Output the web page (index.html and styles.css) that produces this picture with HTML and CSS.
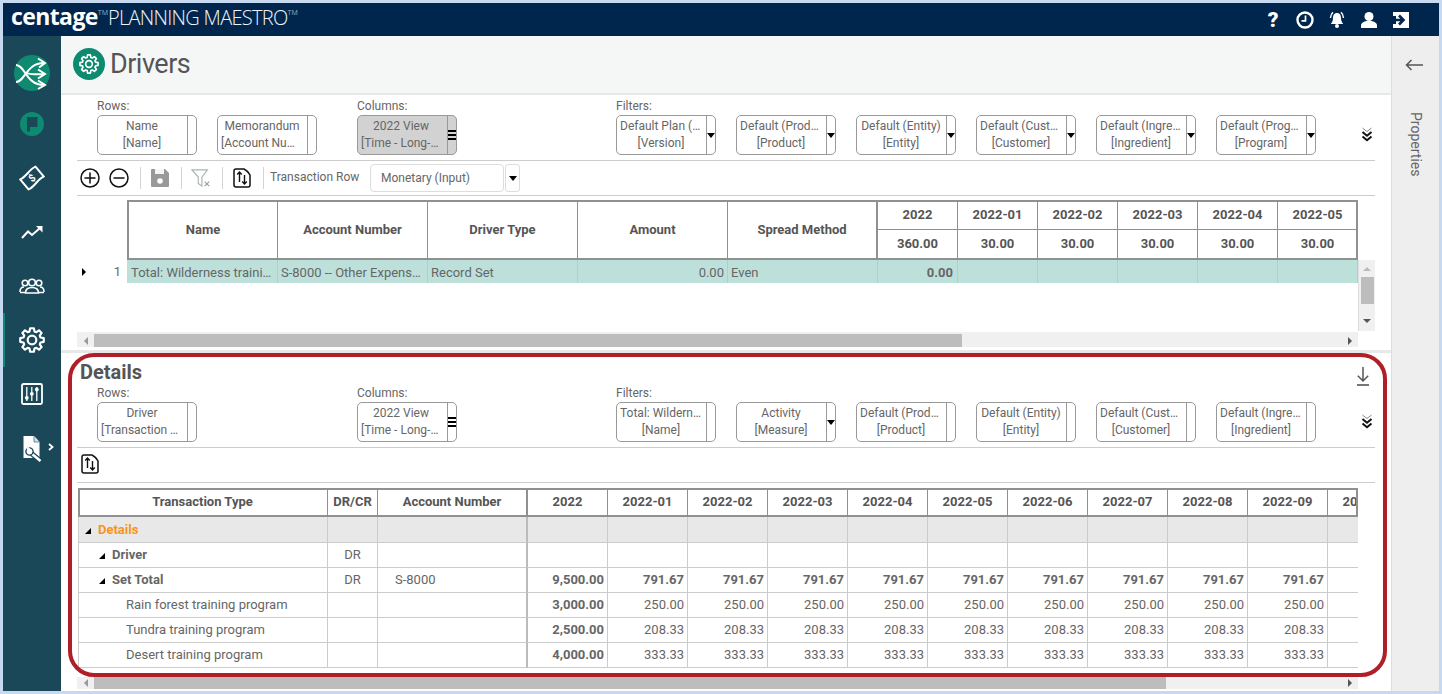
FILE: index.html
```html
<!DOCTYPE html>
<html lang="en">

<head>
  <meta charset="UTF-8">
  <title>Drivers - Planning Maestro</title>
  <link rel="stylesheet" href="styles.css">
</head>

<body>
  <svg class="defs" width="0" height="0">
    <symbol id="gear" viewBox="0 0 24 24">
      <path d="M9.74 4.12L10.28 1.14 13.72 1.14 14.26 4.12 15.98 4.83 18.47 3.1 20.9 5.53 19.17 8.02 19.88 9.74 22.86 10.28 22.86 13.72 19.88 14.26 19.17 15.98 20.9 18.47 18.47 20.9 15.98 19.17 14.26 19.88 13.72 22.86 10.28 22.86 9.74 19.88 8.02 19.17 5.53 20.9 3.1 18.47 4.83 15.98 4.12 14.26 1.14 13.72 1.14 10.28 4.12 9.74 4.83 8.02 3.1 5.53 5.53 3.1 8.02 4.83Z" fill="none" stroke="currentColor" stroke-width="2" stroke-linejoin="round"/>
      <circle cx="12" cy="12" r="4" fill="none" stroke="currentColor" stroke-width="2"/>
    </symbol>
    <symbol id="swap" viewBox="0 0 18 20">
      <path d="M1 3Q1 1 3 1H11C13 2 16 5 17 7V17Q17 19 15 19H3Q1 19 1 17Z" fill="#fff" stroke="#111" stroke-width="1.500" stroke-linejoin="round"/>
      <path d="M6.500 14V4M4.200 6.400L6.500 4 8.800 6.400M11.500 7V16M9.200 13.600L11.500 16 13.800 13.600" fill="none" stroke="#111" stroke-width="1.400"/>
    </symbol>
    <symbol id="chevrons" viewBox="0 0 12 16">
      <path d="M1.500 1L6 4.500 10.500 1" fill="none" stroke="#888" stroke-width="1"/>
      <path d="M1.500 5L6 8.800 10.500 5M1.500 9.500L6 13.300 10.500 9.500" fill="none" stroke="#111" stroke-width="2"/>
    </symbol>
  </svg>

  <div class="window">
    <!-- top bar -->
    <header class="topbar">
      <div class="brand">
        <span class="brand-name">centage</span><span class="tm">TM</span>
        <span class="brand-product">PLANNING MAESTRO</span><span class="tm">TM</span>
      </div>
      <div class="top-icons">
        <span class="top-help">?</span>
        <svg class="top-icon" viewBox="0 0 20 20"><circle cx="10" cy="10" r="7.500" fill="none" stroke="#fff" stroke-width="2.400"/><path d="M10.500 5.500V10.800H6.500" fill="none" stroke="#fff" stroke-width="1.700"/></svg>
        <svg class="top-icon" viewBox="0 0 20 20"><path d="M10 3C7 3 6 5.500 6 8 6 11 5 12.500 3.800 14H16.200C15 12.500 14 11 14 8 14 5.500 13 3 10 3Z" fill="#fff"/><circle cx="10" cy="16" r="2" fill="#fff"/><path d="M3.500 8C3.600 5.500 4.500 3.500 6 2.200M16.500 8C16.400 5.500 15.500 3.500 14 2.200" fill="none" stroke="#fff" stroke-width="1.500"/></svg>
        <svg class="top-icon" viewBox="0 0 20 20"><circle cx="10" cy="6.500" r="4.500" fill="#fff"/><path d="M2 18V15.500C2 13 5 11.500 7.500 11H12.500C15 11.500 18 13 18 15.500V18Z" fill="#fff"/></svg>
        <svg class="top-icon" viewBox="0 0 20 20"><path d="M2 2H18V18H2V14H5V6H2Z" fill="#fff"/><path d="M1 10H11M8 5.500L12.500 10 8 14.500" fill="none" stroke="#00264d" stroke-width="2.600"/></svg>
      </div>
    </header>

    <div class="app">
      <!-- left navigation -->
      <nav class="sidebar">
        <svg class="nav-logo" viewBox="0 0 36 36">
          <circle cx="18" cy="18" r="18" fill="#0d8a6f"/>
          <path d="M2 27C11 27 12 8 30 8M2 10C11 10 12 30 30 30M13 18C16 20 20 19 30 19M24 3.500L31 8 25 12.500M24 14.500L31 19 24 23.500M24 25.500L31 30 24 34" fill="none" stroke="#fff" stroke-width="2"/>
        </svg>
        <svg class="nav-flag" viewBox="0 0 24 24">
          <circle cx="12" cy="12" r="12" fill="#0d8a6f"/>
          <path d="M7 5H17.500V15H10V19.500H7Z" fill="#1b4858"/>
        </svg>
        <svg class="nav-icon" viewBox="0 0 26 26">
          <g transform="rotate(-40 13 13)">
            <path d="M3 6.500C9 8.500 17 4.500 23 6.500V19.500C17 17.500 9 21.500 3 19.500Z" fill="#1b4858" stroke="#fff" stroke-width="2" stroke-linejoin="round"/>
            <text class="money-sign" x="13" y="16.500">$</text>
          </g>
        </svg>
        <svg class="nav-icon" viewBox="0 0 26 26">
          <path d="M3 19L9 12.500 13 16 20.500 9.500" fill="none" stroke="#fff" stroke-width="2"/>
          <path d="M17 7H23.500V13.500Z" fill="#fff"/>
        </svg>
        <svg class="nav-icon" viewBox="0 0 26 26">
          <g fill="none" stroke="#fff" stroke-width="1.600">
            <circle cx="6" cy="10" r="2.800"/><circle cx="20" cy="10" r="2.800"/>
            <path d="M1 19C1 15 3 14 5 14M25 19C25 15 23 14 21 14"/>
            <circle cx="13" cy="9.500" r="3.300"/>
            <path d="M6.500 20C6.500 15.500 9 14.500 13 14.500S19.500 15.500 19.500 20Z"/>
            <path d="M1 19.500H6M20 19.500H25"/>
          </g>
        </svg>
        <div class="nav-active">
          <svg class="nav-icon" viewBox="0 0 26 26" color="#fff"><use href="#gear"/></svg>
        </div>
        <svg class="nav-icon" viewBox="0 0 26 26">
          <rect x="3" y="3" width="20" height="20" rx="1.500" fill="none" stroke="#fff" stroke-width="1.800"/>
          <path d="M7.800 6V20M12.800 6V20M17.800 6V20" stroke="#fff" stroke-width="1.300"/>
          <circle cx="7.800" cy="16.800" r="1.900" fill="#fff"/>
          <circle cx="12.800" cy="12.800" r="1.900" fill="#fff"/>
          <circle cx="17.800" cy="8.500" r="1.900" fill="#fff"/>
        </svg>
        <div class="nav-doc">
          <svg class="nav-icon" viewBox="0 0 26 26">
            <path d="M4.500 0H15L20.500 6V22H4.500Z" fill="#fff"/>
            <path d="M15 0V6H20.500" fill="#cfe4ea" stroke="#1b4858" stroke-width=".6"/>
            <path d="M12.500 17.500L21.500 25" stroke="#1b4858" stroke-width="5"/>
            <path d="M12.500 17.500L21.500 25" stroke="#fff" stroke-width="2.600"/>
            <circle cx="10.500" cy="15.500" r="3.600" fill="#fff" stroke="#1b4858" stroke-width="1.400"/>
            <path d="M8.500 11.500L11 15" stroke="#fff" stroke-width="2.400"/>
          </svg>
          <svg class="nav-more" viewBox="0 0 6 8"><path d="M1 1L4.500 4 1 7" fill="none" stroke="#fff" stroke-width="1.800"/></svg>
        </div>
      </nav>

      <main class="content">
        <div class="page-title">
          <span class="title-badge"><svg viewBox="0 0 24 24" color="#fff"><use href="#gear"/></svg></span>
          <h1>Drivers</h1>
        </div>

        <!-- upper grid -->
        <section class="panel panel-upper">
          <div class="field-bar">
            <div class="field-group">
              <label>Rows:</label>
              <div class="pills">
                <div class="pill"><div class="pill-text"><span>Name</span><span>[Name]</span></div><div class="pill-btn"></div></div>
                <div class="pill"><div class="pill-text"><span>Memorandum</span><span>[Account Number]</span></div><div class="pill-btn"></div></div>
              </div>
            </div>
            <div class="field-group">
              <label>Columns:</label>
              <div class="pills">
                <div class="pill pill-on pill-time"><div class="pill-text"><span>2022 View</span><span>[Time - Long-term]</span></div><div class="pill-btn"><i class="menu-bars"></i></div></div>
              </div>
            </div>
            <div class="field-group">
              <label>Filters:</label>
              <div class="pills">
                <div class="pill"><div class="pill-text"><span>Default Plan (Working)</span><span>[Version]</span></div><div class="pill-btn"><i class="caret"></i></div></div>
                <div class="pill"><div class="pill-text"><span>Default (Product)</span><span>[Product]</span></div><div class="pill-btn"><i class="caret"></i></div></div>
                <div class="pill"><div class="pill-text"><span>Default (Entity)</span><span>[Entity]</span></div><div class="pill-btn"><i class="caret"></i></div></div>
                <div class="pill"><div class="pill-text"><span>Default (Customer)</span><span>[Customer]</span></div><div class="pill-btn"><i class="caret"></i></div></div>
                <div class="pill"><div class="pill-text"><span>Default (Ingredient)</span><span>[Ingredient]</span></div><div class="pill-btn"><i class="caret"></i></div></div>
                <div class="pill"><div class="pill-text"><span>Default (Program)</span><span>[Program]</span></div><div class="pill-btn"><i class="caret"></i></div></div>
                <svg class="more-fields"><use href="#chevrons"/></svg>
              </div>
            </div>
          </div>

          <div class="toolbar">
            <svg class="tool tool-first" viewBox="0 0 20 20"><circle cx="10" cy="10" r="9" fill="none" stroke="#111" stroke-width="1.500"/><path d="M4.500 10H15.500M10 4.500V15.500" stroke="#111" stroke-width="1.500"/></svg>
            <svg class="tool" viewBox="0 0 20 20"><circle cx="10" cy="10" r="9" fill="none" stroke="#111" stroke-width="1.500"/><path d="M4.500 10H15.500" stroke="#111" stroke-width="1.500"/></svg>
            <i class="tool-sep"></i>
            <svg class="tool" viewBox="0 0 20 20"><path d="M2 1H15L19 5V18Q19 19 18 19H2Q1 19 1 18V2Q1 1 2 1Z" fill="#999"/><path d="M5 1H14V6H5Z" fill="#fff" opacity=".9"/><circle cx="10" cy="13" r="2.800" fill="#fff"/></svg>
            <i class="tool-sep"></i>
            <svg class="tool" viewBox="0 0 22 20"><path d="M1 1H18L12 9V19L8 16V9Z" fill="#fff" stroke="#a9b3b6" stroke-width="1.300"/><path d="M15 14L20 19M20 14L15 19" stroke="#999" stroke-width="1.200"/></svg>
            <i class="tool-sep"></i>
            <svg class="tool"><use href="#swap"/></svg>
            <i class="tool-sep"></i>
            <span class="tool-label">Transaction Row</span>
            <div class="combo">Monetary (Input)</div>
            <div class="combo-btn"><i class="caret"></i></div>
          </div>

          <div class="grid-head grid-head-upper">
            <table>
              <colgroup><col class="w149"><col class="w150"><col class="w150"><col class="w150"><col class="w150"><col class="w80"><col class="w80"><col class="w80"><col class="w80"><col class="w80"><col class="w80"></colgroup>
              <tr class="tall">
                <th rowspan="2">Name</th><th rowspan="2">Account Number</th><th rowspan="2">Driver Type</th><th rowspan="2">Amount</th><th rowspan="2" class="freeze">Spread Method</th>
                <th>2022</th><th>2022-01</th><th>2022-02</th><th>2022-03</th><th>2022-04</th><th>2022-05</th>
              </tr>
              <tr class="tall">
                <th>360.00</th><th>30.00</th><th>30.00</th><th>30.00</th><th>30.00</th><th>30.00</th>
              </tr>
            </table>
          </div>

          <div class="grid-area">
            <div class="grid-body grid-body-upper">
              <table class="driver-table">
                <colgroup><col class="w50"><col class="w151"><col class="w150"><col class="w150"><col class="w150"><col class="w150"><col class="w80"><col class="w80"><col class="w80"><col class="w80"><col class="w80"><col class="w80"></colgroup>
                <tr>
                  <td class="row-head"><i class="row-arrow"></i><span>1</span></td>
                  <td class="first">Total: Wilderness training program</td>
                  <td>S-8000 -- Other Expenses</td>
                  <td>Record Set</td>
                  <td class="num">0.00</td>
                  <td>Even</td>
                  <td class="num bold">0.00</td>
                  <td></td><td></td><td></td><td></td><td></td>
                </tr>
              </table>
            </div>
            <div class="vscroll">
              <i class="sc-up"></i>
              <b></b>
              <i class="sc-down"></i>
            </div>
          </div>

          <div class="hscroll hscroll-upper">
            <span class="sc-end"><i class="sc-left"></i></span>
            <b class="thumb-upper"></b>
            <span class="sc-end sc-end-right"><i class="sc-right"></i></span>
          </div>
        </section>

        <div class="splitter"></div>

        <!-- details grid -->
        <section class="panel panel-details">
          <div class="details-head">
            <h2>Details</h2>
            <svg class="download" viewBox="0 0 14 20"><path d="M7 1V15M1.800 9.800L7 15 12.200 9.800" fill="none" stroke="#555" stroke-width="1.500"/><path d="M1 19H13" stroke="#555" stroke-width="1.600"/></svg>
          </div>
          <div class="field-bar field-bar-details">
            <div class="field-group">
              <label>Rows:</label>
              <div class="pills">
                <div class="pill"><div class="pill-text"><span>Driver</span><span>[Transaction Type]</span></div><div class="pill-btn"></div></div>
              </div>
            </div>
            <div class="field-group">
              <label>Columns:</label>
              <div class="pills">
                <div class="pill pill-time"><div class="pill-text"><span>2022 View</span><span>[Time - Long-term]</span></div><div class="pill-btn"><i class="menu-bars"></i></div></div>
              </div>
            </div>
            <div class="field-group">
              <label>Filters:</label>
              <div class="pills">
                <div class="pill"><div class="pill-text"><span>Total: Wilderness training</span><span>[Name]</span></div><div class="pill-btn"></div></div>
                <div class="pill"><div class="pill-text"><span>Activity</span><span>[Measure]</span></div><div class="pill-btn"><i class="caret"></i></div></div>
                <div class="pill"><div class="pill-text"><span>Default (Product)</span><span>[Product]</span></div><div class="pill-btn"></div></div>
                <div class="pill"><div class="pill-text"><span>Default (Entity)</span><span>[Entity]</span></div><div class="pill-btn"></div></div>
                <div class="pill"><div class="pill-text"><span>Default (Customer)</span><span>[Customer]</span></div><div class="pill-btn"></div></div>
                <div class="pill"><div class="pill-text"><span>Default (Ingredient)</span><span>[Ingredient]</span></div><div class="pill-btn"></div></div>
                <svg class="more-fields"><use href="#chevrons"/></svg>
              </div>
            </div>
          </div>

          <div class="toolbar toolbar-details">
            <svg class="tool-swap"><use href="#swap"/></svg>
          </div>

          <div class="grid-head grid-head-details">
            <table>
              <colgroup><col class="w248"><col class="w50"><col class="w150"><col class="w80"><col class="w80"><col class="w80"><col class="w80"><col class="w80"><col class="w80"><col class="w80"><col class="w80"><col class="w80"><col class="w80"><col class="w80"></colgroup>
              <tr>
                <th>Transaction Type</th><th>DR/CR</th><th class="freeze">Account Number</th>
                <th>2022</th><th>2022-01</th><th>2022-02</th><th>2022-03</th><th>2022-04</th><th>2022-05</th><th>2022-06</th><th>2022-07</th><th>2022-08</th><th>2022-09</th><th>2022-10</th>
              </tr>
            </table>
          </div>

          <div class="grid-body grid-body-details">
            <table class="details-table">
              <colgroup><col class="w250"><col class="w50"><col class="w150"><col class="w80"><col class="w80"><col class="w80"><col class="w80"><col class="w80"><col class="w80"><col class="w80"><col class="w80"><col class="w80"><col class="w80"><col class="w80"></colgroup>
              <tr class="row-group">
                <td class="lvl0"><i class="tree"></i><b class="orange">Details</b></td><td></td><td class="freeze"></td>
                <td></td><td></td><td></td><td></td><td></td><td></td><td></td><td></td><td></td><td></td><td></td>
              </tr>
              <tr>
                <td class="lvl1"><i class="tree"></i><b>Driver</b></td><td class="mid">DR</td><td class="freeze"></td>
                <td></td><td></td><td></td><td></td><td></td><td></td><td></td><td></td><td></td><td></td><td></td>
              </tr>
              <tr class="row-total">
                <td class="lvl1"><i class="tree"></i><b>Set Total</b></td><td class="mid">DR</td><td class="freeze acct">S-8000</td>
                <td class="num">9,500.00</td><td class="num">791.67</td><td class="num">791.67</td><td class="num">791.67</td><td class="num">791.67</td><td class="num">791.67</td><td class="num">791.67</td><td class="num">791.67</td><td class="num">791.67</td><td class="num">791.67</td><td></td>
              </tr>
              <tr>
                <td class="lvl2">Rain forest training program</td><td></td><td class="freeze"></td>
                <td class="num bold">3,000.00</td><td class="num">250.00</td><td class="num">250.00</td><td class="num">250.00</td><td class="num">250.00</td><td class="num">250.00</td><td class="num">250.00</td><td class="num">250.00</td><td class="num">250.00</td><td class="num">250.00</td><td></td>
              </tr>
              <tr>
                <td class="lvl2">Tundra training program</td><td></td><td class="freeze"></td>
                <td class="num bold">2,500.00</td><td class="num">208.33</td><td class="num">208.33</td><td class="num">208.33</td><td class="num">208.33</td><td class="num">208.33</td><td class="num">208.33</td><td class="num">208.33</td><td class="num">208.33</td><td class="num">208.33</td><td></td>
              </tr>
              <tr>
                <td class="lvl2">Desert training program</td><td></td><td class="freeze"></td>
                <td class="num bold">4,000.00</td><td class="num">333.33</td><td class="num">333.33</td><td class="num">333.33</td><td class="num">333.33</td><td class="num">333.33</td><td class="num">333.33</td><td class="num">333.33</td><td class="num">333.33</td><td class="num">333.33</td><td></td>
              </tr>
            </table>
          </div>

          <div class="hscroll hscroll-details">
            <span class="sc-end"><i class="sc-left"></i></span>
            <b class="thumb-details"></b>
            <span class="sc-end sc-end-right"><i class="sc-right"></i></span>
          </div>

          <!-- red callout drawn over the panel -->
          <div class="callout"></div>
        </section>
      </main>

      <!-- properties rail -->
      <aside class="properties">
        <svg class="back" viewBox="0 0 18 12"><path d="M18 6H1.500M6.500 1L1.500 6 6.500 11" fill="none" stroke="#555" stroke-width="1.500"/></svg>
        <span class="properties-label">Properties</span>
      </aside>
    </div>
  </div>
</body>

</html>
```

FILE: styles.css
```css
:root {
  --navy: #00264d;
  --rail: #1b4858;
  --green: #0d8a6f;
  --text: #666;
  --head: #555;
  --line: #ccc;
  --frame: #909090;
}

* {
  box-sizing: border-box;
  margin: 0;
  padding: 0;
}

html,
body {
  height: 694px;
  overflow: hidden;
}

body {
  background: #c6d9f1;
  padding: 3px;
  font-family: Roboto, 'Liberation Sans', sans-serif;
  font-size: 13px;
  color: var(--text);
}

i {
  display: block;
}

.defs {
  position: absolute;
}

.window {
  height: 688px;
  display: flex;
  flex-direction: column;
}

/* top bar */
.topbar {
  height: 33px;
  flex: none;
  background: var(--navy);
  color: #fff;
  display: flex;
  align-items: center;
  justify-content: space-between;
  padding: 0 28px 0 8px;
}

.brand {
  display: flex;
  align-items: flex-start;
  height: 33px;
  font-family: 'Open Sans', sans-serif;
}

.brand-name {
  font-size: 23px;
  line-height: 26px;
  font-weight: 700;
  letter-spacing: -0.6px;
}

.brand-product {
  font-size: 20px;
  line-height: 29px;
  font-weight: 300;
  letter-spacing: -0.7px;
  color: #f0f3f6;
}

.tm {
  font-size: 7px;
  line-height: 14px;
  margin-top: 3px;
  color: #9fb0c2;
}

.top-icons {
  display: flex;
  align-items: center;
}

.top-icon {
  width: 20px;
  height: 20px;
  margin-left: 12px;
}

.top-help {
  width: 20px;
  text-align: center;
  font-size: 21px;
  line-height: 20px;
  font-weight: 900;
}

.app {
  flex: 1;
  display: flex;
  min-height: 0;
}

/* left nav */
.sidebar {
  width: 58px;
  flex: none;
  background: var(--rail);
  display: flex;
  flex-direction: column;
  align-items: center;
  padding-top: 19px;
}

.nav-logo {
  width: 36px;
  height: 36px;
}

.nav-flag {
  width: 24px;
  height: 24px;
  margin: 21px 0 29px;
}

.nav-icon {
  width: 26px;
  height: 26px;
  display: block;
}

.sidebar > .nav-icon {
  margin-bottom: 28px;
}

.money-sign {
  font-size: 10px;
  font-weight: 700;
  fill: #fff;
  text-anchor: middle;
}

.nav-active {
  align-self: stretch;
  height: 54px;
  margin: -14px 0 14px;
  border-left: 2px solid var(--green);
  display: flex;
  align-items: center;
  justify-content: center;
  padding-right: 2px;
}

.nav-doc {
  position: relative;
  margin-top: 1px;
}

.nav-more {
  position: absolute;
  left: 29px;
  top: 7px;
  width: 6px;
  height: 8px;
}

/* main column */
.content {
  width: 1330px;
  flex: none;
  background: #fff;
  display: flex;
  flex-direction: column;
  min-width: 0;
}

.page-title {
  height: 59px;
  flex: none;
  background: #f5f7f7;
  border-bottom: 2px solid #e8e8e8;
  display: flex;
  align-items: center;
  padding: 0 0 2px 12px;
}

.title-badge {
  width: 32px;
  height: 32px;
  border-radius: 50%;
  background: var(--green);
  display: flex;
  align-items: center;
  justify-content: center;
}

.title-badge svg {
  width: 20px;
  height: 20px;
}

.page-title h1 {
  font-size: 27px;
  font-weight: 400;
  color: #555;
  margin-left: 5px;
  letter-spacing: -0.5px;
}

.panel {
  padding: 0 16px;
  flex: none;
}

.panel-upper {
  height: 255px;
}

.splitter {
  height: 3px;
  flex: none;
  background: #e8e8e8;
}

.panel-details {
  position: relative;
  flex: 1;
  overflow: hidden;
}

/* rows / columns / filters */
.field-bar {
  display: grid;
  grid-template-columns: 260px 259px 1fr;
  padding: 2px 0 5px 20px;
  border-bottom: 1px solid var(--line);
  height: 66px;
}

.field-bar-details {
  padding-top: 0;
  height: 63px;
}

.field-group label {
  display: block;
  font-size: 12px;
  line-height: 18px;
}

.field-bar-details label {
  line-height: 17px;
}

.pills {
  display: flex;
  gap: 20px;
  align-items: center;
}

.pill {
  width: 100px;
  height: 40px;
  border: 1px solid #999;
  border-radius: 5px;
  display: flex;
  background: #fff;
  flex: none;
}

.pill-on {
  background: #d2d2d2;
}

.pill-text {
  width: 89px;
  padding: 2px 4px 2px 3px;
  font-size: 12px;
  line-height: 17px;
  text-align: center;
}

.pill-time .pill-text {
  padding-right: 6px;
}

.pill-text span {
  display: block;
  white-space: nowrap;
  overflow: hidden;
  text-overflow: ellipsis;
}

.pill-btn {
  flex: 1;
  border-left: 1px solid #999;
  display: flex;
  align-items: center;
  justify-content: center;
}

.caret {
  width: 0;
  height: 0;
  border: 4.5px solid transparent;
  border-top: 5px solid #000;
  border-bottom: 0;
}

.menu-bars {
  width: 8px;
  height: 10px;
  border-top: 2px solid #000;
  border-bottom: 2px solid #000;
  position: relative;
}

.menu-bars::after {
  content: "";
  display: block;
  height: 2px;
  margin-top: 2px;
  background: #000;
}

.more-fields {
  width: 12px;
  height: 16px;
  margin-left: 25px;
  margin-top: -1px;
}

/* toolbars */
.toolbar {
  height: 35px;
  display: flex;
  align-items: center;
  padding-left: 3px;
  border-bottom: 1px solid var(--line);
}

.tool {
  width: 20px;
  height: 20px;
  flex: none;
}

.tool-first {
  margin-right: 9px;
}

.tool-sep {
  width: 1px;
  height: 22px;
  margin: 0 9px 0 11px;
  background: #d4d4d4;
}

.tool-label {
  font-size: 12px;
  width: 90px;
  margin-left: -3px;
  margin-top: -2px;
}

.combo {
  width: 134px;
  height: 28px;
  margin-left: 10px;
  border: 1px solid #ddd;
  border-radius: 4px;
  font-size: 12px;
  line-height: 27px;
  padding-left: 10px;
}

.combo-btn {
  width: 15px;
  height: 28px;
  margin-left: 1px;
  border: 1px solid #ddd;
  border-radius: 3px;
  display: flex;
  align-items: center;
  justify-content: center;
}

.toolbar-details {
  padding-left: 4px;
  align-items: flex-start;
  padding-top: 6px;
}

.tool-swap {
  width: 18px;
  height: 20px;
}

/* grids */
table {
  table-layout: fixed;
  border-collapse: separate;
  border-spacing: 0;
}

.w50 { width: 50px; }
.w80 { width: 80px; }
.w149 { width: 149px; }
.w150 { width: 150px; }
.w151 { width: 151px; }
.w248 { width: 248px; }
.w250 { width: 250px; }

.grid-head {
  border: 2px solid var(--frame);
  overflow: hidden;
  background: #fff;
}

.grid-head th {
  font-size: 13px;
  font-weight: 700;
  color: var(--head);
  border-right: 1px solid var(--frame);
  white-space: nowrap;
  overflow: hidden;
  padding-bottom: 2px;
}

.grid-head th.freeze {
  border-right-width: 2px;
}

.grid-head-upper {
  width: 1231px;
  height: 60px;
  margin: 4px 0 0 50px;
}

.grid-head-upper table {
  width: 1229px;
}

.grid-head-upper .tall {
  height: 28px;
}

.grid-head-upper tr:first-child th:nth-child(n+6) {
  border-bottom: 1px solid var(--frame);
}

.grid-head-details {
  width: 1280px;
  height: 29px;
  margin: 5px 0 0 1px;
}

.grid-head-details table {
  width: 1328px;
}

.grid-head-details th {
  height: 25px;
}

.grid-head-details th:first-child {
  padding-right: 2px;
}

.grid-area {
  display: flex;
  height: 73px;
}

.grid-body {
  overflow: hidden;
}

.grid-body-upper {
  width: 1281px;
}

.grid-body td {
  height: 23px;
  padding: 1px 3px 0;
  white-space: nowrap;
  overflow: hidden;
  text-overflow: ellipsis;
}

.driver-table {
  width: 1281px;
}

.driver-table td {
  background: #bde0da;
  border-right: 1px solid #b0d0cb;
}

.driver-table td.first {
  padding-left: 4px;
}

.driver-table td.bold {
  padding-right: 4px;
}

.driver-table td.row-head {
  background: #fff;
  border: 0;
  padding: 0 6px 0 5px;
  display: flex;
  align-items: center;
  justify-content: space-between;
}

.row-arrow {
  border-left: 4px solid #000;
  border-top: 4px solid transparent;
  border-bottom: 4px solid transparent;
}

.num {
  text-align: right;
}

.bold {
  font-weight: 700;
}

.grid-body-details {
  width: 1280px;
  height: 151px;
  margin-left: 1px;
}

.details-table {
  width: 1330px;
}

.details-table td {
  height: 25px;
  padding: 0 3px 2px;
  border-right: 1px solid var(--line);
  border-bottom: 1px solid var(--line);
}

.details-table .row-group td {
  height: 26px;
  padding-bottom: 0;
  background: #e8e8e8;
}

.details-table td:first-child {
  border-left: 1px solid var(--line);
}

.details-table td.freeze {
  border-right: 2px solid #bbb;
}

.row-total td.num,
.details-table b {
  font-weight: 700;
}

.orange {
  color: #f7941d;
}

.tree {
  display: inline-block;
  width: 0;
  height: 0;
  border-bottom: 6px solid #000;
  border-left: 6px solid transparent;
  margin-right: 7px;
}

.details-table td.lvl0 { padding-left: 6px; }
.details-table td.lvl1 { padding-left: 20px; }
.details-table td.lvl2 { padding-left: 47px; }
.details-table td.mid { text-align: center; }
.details-table td.acct { padding-left: 17px; }

/* scrollbars */
.vscroll {
  width: 17px;
  height: 71px;
  background: #f0f0f0;
  display: flex;
  flex-direction: column;
  align-items: center;
  border-left: 1px solid #ddd;
}

.vscroll b {
  width: 13px;
  height: 27px;
  margin-top: 6px;
  background: #bdbdbd;
}

.sc-up {
  margin-top: 7px;
  border: 4px solid transparent;
  border-top: 0;
  border-bottom: 4px solid #bbb;
}

.sc-down {
  margin-top: 15px;
  border: 4px solid transparent;
  border-bottom: 0;
  border-top: 4px solid #555;
}

.hscroll {
  width: 1281px;
  background: #f0f0f0;
  display: flex;
  align-items: stretch;
}

.hscroll-upper {
  height: 15px;
  margin-top: -1px;
  padding-top: 2px;
}

.hscroll-details {
  height: 12px;
  margin-top: 9px;
}

.thumb-upper {
  width: 868px;
  background: #bdbdbd;
}

.thumb-details {
  width: 1072px;
  background: #bdbdbd;
}

.sc-end {
  width: 17px;
  display: flex;
  align-items: center;
  justify-content: center;
}

.sc-end-right {
  margin-left: auto;
}

.sc-left {
  border: 4px solid transparent;
  border-left: 0;
  border-right: 4px solid #999;
}

.sc-right {
  border: 4px solid transparent;
  border-right: 0;
  border-left: 4px solid #555;
}

/* details section */
.details-head {
  height: 32px;
  padding: 6px 0 0 3px;
  display: flex;
  justify-content: space-between;
}

.details-head h2 {
  font-size: 20px;
  line-height: 26px;
  font-weight: 700;
  color: #555;
}

.download {
  width: 14px;
  height: 20px;
  margin: 7px 5px 0 0;
}

.callout {
  position: absolute;
  left: 7px;
  top: 0;
  width: 1319px;
  height: 324px;
  border: 4px solid #b01e28;
  border-radius: 26px;
  pointer-events: none;
}

/* properties rail */
.properties {
  flex: 1;
  background: #eee;
  border-left: 1px solid #ddd;
  display: flex;
  flex-direction: column;
  align-items: center;
  padding-top: 23px;
}

.back {
  width: 18px;
  height: 12px;
  margin-right: 3px;
}

.properties-label {
  writing-mode: vertical-rl;
  font-size: 14px;
  margin-top: 41px;
  color: #666;
}
```
